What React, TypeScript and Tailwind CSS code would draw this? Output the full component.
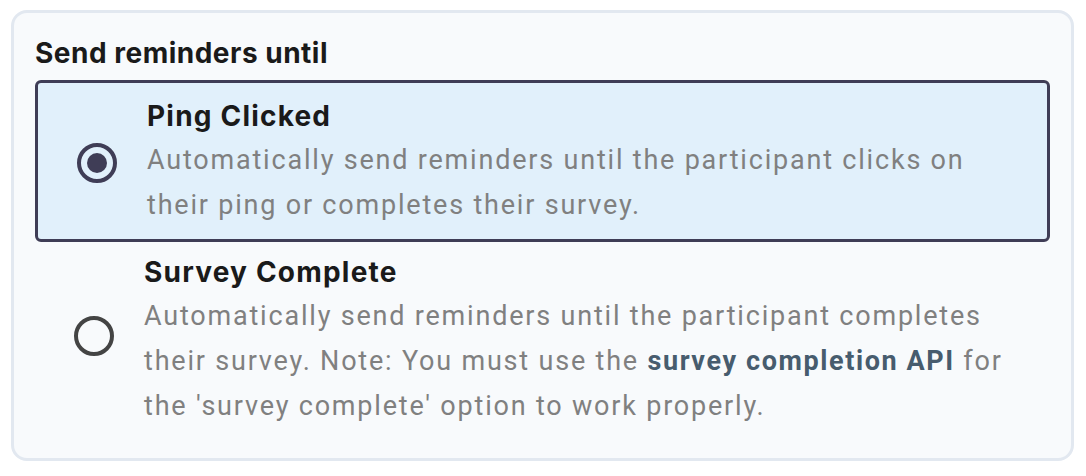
import { useState } from "react";

const options = [
  {
    id: "ping",
    title: "Ping Clicked",
    body: (
      <>
        Automatically send reminders until the participant clicks on their ping
        or completes their survey.
      </>
    ),
  },
  {
    id: "survey",
    title: "Survey Complete",
    body: (
      <>
        Automatically send reminders until the participant completes their
        survey. Note: You must use the{" "}
        <a href="#" className="font-bold tracking-[1.6px] text-[#475c6e]">
          survey completion API
        </a>{" "}
        for the 'survey complete' option to work properly.
      </>
    ),
  },
];

function Radio({ checked }: { checked: boolean }) {
  return (
    <span
      className={
        checked
          ? "mb-[2px] flex h-[40px] w-[40px] shrink-0 items-center justify-center rounded-full border-[4px] border-[#3f3d56]"
          : "mb-[12px] flex h-[40px] w-[40px] shrink-0 items-center justify-center rounded-full border-[4px] border-[#444444]"
      }
    >
      {checked && <span className="h-[20px] w-[20px] rounded-full bg-[#3f3d56]" />}
    </span>
  );
}

export default function App() {
  const [value, setValue] = useState("ping");

  return (
    <div className="bg-white px-[11px] pt-[10px] font-['Inter',sans-serif]">
      <div className="h-[451px] w-[1063px] rounded-[16px] border-[3px] border-[#e2e8f0] bg-[#f8fafc] px-[21px] pt-[23px]">
        <h2 className="text-[28px] leading-[34px] font-bold tracking-[0.5px] text-[#1a1a1a]">
          Send reminders until
        </h2>

        <div className="mt-[10px] flex flex-col">
          {options.map((o) => {
            const checked = value === o.id;
            return (
              <label
                key={o.id}
                onClick={() => setValue(o.id)}
                className={
                  checked
                    ? "flex cursor-pointer items-center gap-[30px] rounded-[6px] border-[3px] border-[#3f3d56] bg-[#e1f0fb] pt-[16px] pr-[20px] pb-[11px] pl-[39px]"
                    : "flex cursor-pointer items-center gap-[30px] rounded-[6px] border-[3px] border-transparent pt-[10px] pr-[20px] pb-[16px] pl-[36px]"
                }
              >
                <Radio checked={checked} />
                <div className="flex flex-col">
                  <span className="text-[28px] leading-[34px] font-bold tracking-[1.2px] text-[#1a1a1a]">
                    {o.title}
                  </span>
                  <p className="mt-[5px] max-w-[870px] font-['Roboto',sans-serif] text-[27px] leading-[45px] tracking-[1.8px] text-[#808080]">
                    {o.body}
                  </p>
                </div>
              </label>
            );
          })}
        </div>
      </div>
    </div>
  );
}
